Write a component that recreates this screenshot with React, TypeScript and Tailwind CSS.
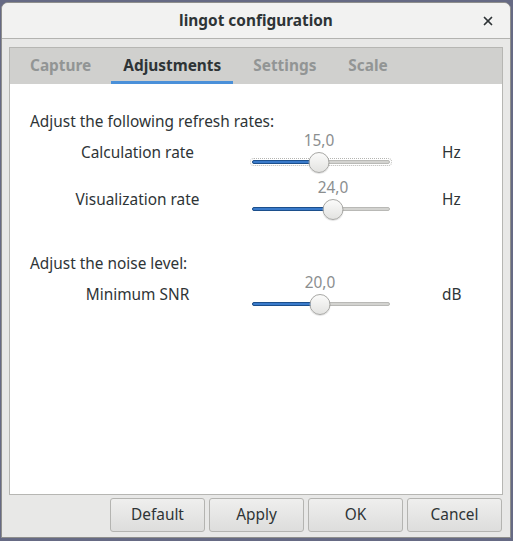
import { X } from "lucide-react";

const tabs = ["Capture", "Adjustments", "Settings", "Scale"];

type RowProps = {
  label: string;
  value: string;
  knob: number; // knob centre, px from track start
  unit: string;
  focused?: boolean;
};

function ScaleRow({ label, value, knob, unit, focused }: RowProps) {
  return (
    <div className="flex h-[40px] items-center">
      <div className="w-[215px] pt-[4px] text-center">{label}</div>
      <div className="relative ml-[7px] h-[40px] w-[138px]">
        <div
          className="absolute top-[1px] h-[17px] -translate-x-1/2 leading-[17px] text-[#8b8e8f]"
          style={{ left: knob }}
        >
          {value}
        </div>
        {focused ? (
          <div className="absolute left-[-2px] right-[-2px] top-[27px] h-[8px] rounded-full border border-dotted border-[#b5b5b2]" />
        ) : null}
        <div className="absolute left-0 right-0 top-[29px] h-[4px] rounded-full border border-[#b9b9b6] bg-[#d3d3d0]" />
        <div
          className="absolute left-0 top-[29px] h-[4px] rounded-full border border-[#1c4f8c] bg-[#3a7bcb]"
          style={{ width: knob }}
        />
        <div
          className="absolute top-[21px] h-[21px] w-[21px] -translate-x-1/2 rounded-full border border-[#a8a8a5] bg-gradient-to-b from-[#fbfbfa] to-[#e3e3e1] shadow-[0_1px_1px_rgba(0,0,0,0.12)]"
          style={{ left: knob }}
        />
      </div>
      <div className="ml-[52px] pt-[4px]">{unit}</div>
    </div>
  );
}

export default function App() {
  return (
    <div
      className="h-[541px] w-[513px] bg-[#666a84] pb-[3px] pl-[1px] pr-[2px] pt-[2px] text-[15.4px] text-[#2e3436]"
      style={{ fontFamily: '"Noto Sans", "Open Sans", sans-serif' }}
    >
      <div className="flex h-full flex-col overflow-hidden rounded-t-[7px] border border-[#8f8f8d] bg-[#e8e8e7]">
        <div className="relative flex h-[36px] shrink-0 items-center justify-center border-b border-[#b3b3b0] bg-[#f2f2f1]">
          <span className="font-bold">lingot configuration</span>
          <X className="absolute right-[15px] top-[11px] h-[14px] w-[14px]" strokeWidth={3} />
        </div>

        <div className="flex flex-1 flex-col px-[7px] pt-[8px]">
          <div className="flex flex-1 flex-col border border-[#b6b6b3]">
            <div className="flex h-[36px] shrink-0 gap-[8px] bg-[#d0d0ce] pl-[8px]">
              {tabs.map((t) => (
                <div
                  key={t}
                  className={
                    t === "Adjustments"
                      ? "flex items-center border-b-[3px] border-[#4a90d9] px-[12px] pt-[2px] font-bold text-[#2e3436]"
                      : "flex items-center border-b-[3px] border-transparent px-[12px] pt-[2px] font-bold text-[#929595]"
                  }
                >
                  {t}
                </div>
              ))}
            </div>

            <div className="flex-1 bg-white px-[20px] pt-[25px]">
              <div className="h-[22px] pt-[3px] leading-[19px]">Adjust the following refresh rates:</div>
              <div className="flex flex-col gap-[7px]">
                <ScaleRow label="Calculation rate" value="15,0" knob={67} unit="Hz" focused />
                <ScaleRow label="Visualization rate" value="24,0" knob={81} unit="Hz" />
              </div>
              <div className="mt-[34px] h-[21px] pt-[3px] leading-[18px]">Adjust the noise level:</div>
              <div>
                <ScaleRow label="Minimum SNR" value="20,0" knob={68} unit="dB" />
              </div>
            </div>
          </div>

          <div className="flex justify-end gap-[4px] pb-[5px] pr-[1px] pt-[3px]">
            {["Default", "Apply", "OK", "Cancel"].map((b) => (
              <button
                key={b}
                className="h-[34px] w-[95px] rounded-[3px] border border-[#b4b4b1] bg-gradient-to-b from-[#efefee] to-[#dddddc] text-[#2e3436]"
              >
                {b}
              </button>
            ))}
          </div>
        </div>
      </div>
    </div>
  );
}
